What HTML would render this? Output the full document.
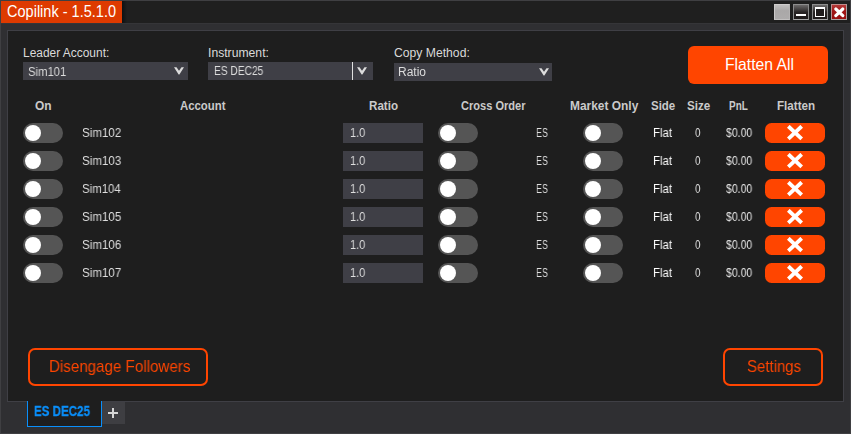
<!DOCTYPE html><html><head><meta charset="utf-8"><title>Copilink - 1.5.1.0</title><style>
*{box-sizing:border-box;margin:0;padding:0}
html,body{width:851px;height:434px;overflow:hidden;background:#2d2d30}
body{position:relative;font-family:"Liberation Sans",sans-serif;font-size:12px;color:#e4e4e4}
.a{position:absolute;white-space:nowrap;line-height:1}
.t{transform-origin:0 0}
.g{will-change:transform}
#win{left:0;top:0;width:851px;height:434px;border:1px solid #3f3f42;background:#2f2f32}
#tbar{left:1px;top:1px;width:849px;height:22px;background:#1f1f1f}
#ttab{left:1px;top:1px;width:121px;height:22px;background:#de3a00}
#panel{left:7px;top:30px;width:837px;height:372px;border:1px solid #3f3f45;background:#1e1e1e}
.cb{background:#3f3f46;height:18px}
.tg{width:40px;height:20px;border-radius:10px;background:#555}
.tg i{position:absolute;left:2px;top:2px;width:16px;height:16px;border-radius:8px;background:#fff}
.rb{left:343px;width:80px;height:20px;background:#3f3f46}
.fx{left:765px;width:60px;height:20px;border-radius:6.5px;background:#ff4500}
.ob{border:2px solid #ff4500;border-radius:7px}
.wb{top:4px;width:16px;height:16px}
</style></head><body>
<div id="win" class="a"></div>
<div id="tbar" class="a"></div>
<div class="a" style="left:1px;top:23px;width:849px;height:1px;background:#353538"></div>
<div class="a" style="left:122px;top:1px;width:5px;height:22px;background:linear-gradient(to right,#0d1113,#1f1f1f)"></div>
<div id="ttab" class="a"></div>
<div class="a wb" style="left:774px;background:linear-gradient(#c0bebe,#aaa8a8 40%,#adabab);border:1px solid;border-color:#cfcdcd #b4b2b2 #c2c0c0 #cbc9c9"></div>
<div class="a wb" style="left:793px;background:linear-gradient(#6c6a6a,#282424 52%,#1e1a1a);border:1px solid;border-color:#8e8e8e #8a8a8a #a6a6a6 #8a8a8a"><div class="a" style="left:2px;top:9px;width:10px;height:2px;background:#fff"></div></div>
<div class="a wb" style="left:812px;background:linear-gradient(#6c6a6a,#282424 52%,#1e1a1a);border:1px solid;border-color:#8e8e8e #8a8a8a #a6a6a6 #8a8a8a"><div class="a" style="left:2px;top:2px;width:10px;height:10px;border:1px solid #fff;border-top-width:2px;background:#1f1b1b"></div></div>
<div class="a wb" style="left:831px;background:linear-gradient(#b43a3a,#a01616 45%,#9a1010);border:1px solid;border-color:#c08c8c #a8a0a0 #a8a4a4 #b89090"><svg class="a" style="left:2px;top:2px" width="11" height="11" viewBox="0 0 11 11"><path d="M1.8 2.0 L8.8 8.6 M8.8 2.0 L1.8 8.6" stroke="#fff" stroke-width="3.1" stroke-linecap="round" fill="none"/></svg></div>
<div id="panel" class="a"></div>
<div class="a cb" style="left:23px;top:62px;width:165px"></div>
<svg class="a" style="left:174px;top:67px" width="10" height="8" viewBox="0 0 10 8"><path d="M0 0.2 L2.5 0.2 L5 3.8 L7.5 0.2 L10 0.2 L5.4 7.4 L4.6 7.4 Z" fill="#dcdcdc"/></svg>
<div class="a cb" style="left:208px;top:62px;width:165px"></div>
<div class="a" style="left:352px;top:62px;width:1px;height:18px;background:#e0e0e0"></div>
<svg class="a" style="left:357px;top:67px" width="10" height="8" viewBox="0 0 10 8"><path d="M0 0.2 L2.5 0.2 L5 3.8 L7.5 0.2 L10 0.2 L5.4 7.4 L4.6 7.4 Z" fill="#dcdcdc"/></svg>
<div class="a cb" style="left:394px;top:63px;width:158px"></div>
<svg class="a" style="left:539px;top:68.2px" width="10" height="8" viewBox="0 0 10 8"><path d="M0 0.2 L2.5 0.2 L5 3.8 L7.5 0.2 L10 0.2 L5.4 7.4 L4.6 7.4 Z" fill="#dcdcdc"/></svg>
<div class="a" style="left:688px;top:46px;width:140px;height:38px;border-radius:6px;background:#ff4500"></div>
<div class="a tg" style="left:23px;top:123px"><i></i></div>
<div class="a rb" style="top:123px"></div>
<div class="a tg" style="left:438px;top:123px"><i></i></div>
<div class="a tg" style="left:583px;top:123px"><i></i></div>
<div class="a fx" style="top:123px"><svg class="a" style="left:22px;top:2px" width="16" height="16" viewBox="0 0 16 16"><path d="M1.3 1.3 L14.7 13.9 M14.7 1.3 L1.3 13.9" stroke="#fff" stroke-width="3.9" fill="none"/></svg></div>
<div class="a t g" style="left:81.84px;top:127px;font-size:12px;color:#dedede;transform:scaleX(0.9641);">Sim102</div>
<div class="a t g" style="left:350.10px;top:127px;font-size:12px;color:#dedede;transform:scaleX(0.9133);">1.0</div>
<div class="a t g" style="left:535.98px;top:127px;font-size:12px;color:#dedede;transform:scaleX(0.7491);">ES</div>
<div class="a t g" style="left:653.03px;top:127px;font-size:12px;color:#fff;transform:scaleX(0.9526);">Flat</div>
<div class="a t g" style="left:695.46px;top:127px;font-size:12px;color:#dedede;transform:scaleX(0.8069);">0</div>
<div class="a t g" style="left:725.93px;top:127px;font-size:12px;color:#e6e6e6;transform:scaleX(0.8743);">$0.00</div>
<div class="a tg" style="left:23px;top:151px"><i></i></div>
<div class="a rb" style="top:151px"></div>
<div class="a tg" style="left:438px;top:151px"><i></i></div>
<div class="a tg" style="left:583px;top:151px"><i></i></div>
<div class="a fx" style="top:151px"><svg class="a" style="left:22px;top:2px" width="16" height="16" viewBox="0 0 16 16"><path d="M1.3 1.3 L14.7 13.9 M14.7 1.3 L1.3 13.9" stroke="#fff" stroke-width="3.9" fill="none"/></svg></div>
<div class="a t g" style="left:81.84px;top:155px;font-size:12px;color:#dedede;transform:scaleX(0.9641);">Sim103</div>
<div class="a t g" style="left:350.10px;top:155px;font-size:12px;color:#dedede;transform:scaleX(0.9133);">1.0</div>
<div class="a t g" style="left:535.98px;top:155px;font-size:12px;color:#dedede;transform:scaleX(0.7491);">ES</div>
<div class="a t g" style="left:653.03px;top:155px;font-size:12px;color:#fff;transform:scaleX(0.9526);">Flat</div>
<div class="a t g" style="left:695.46px;top:155px;font-size:12px;color:#dedede;transform:scaleX(0.8069);">0</div>
<div class="a t g" style="left:725.93px;top:155px;font-size:12px;color:#e6e6e6;transform:scaleX(0.8743);">$0.00</div>
<div class="a tg" style="left:23px;top:179px"><i></i></div>
<div class="a rb" style="top:179px"></div>
<div class="a tg" style="left:438px;top:179px"><i></i></div>
<div class="a tg" style="left:583px;top:179px"><i></i></div>
<div class="a fx" style="top:179px"><svg class="a" style="left:22px;top:2px" width="16" height="16" viewBox="0 0 16 16"><path d="M1.3 1.3 L14.7 13.9 M14.7 1.3 L1.3 13.9" stroke="#fff" stroke-width="3.9" fill="none"/></svg></div>
<div class="a t g" style="left:81.86px;top:183px;font-size:12px;color:#dedede;transform:scaleX(0.9529);">Sim104</div>
<div class="a t g" style="left:350.10px;top:183px;font-size:12px;color:#dedede;transform:scaleX(0.9133);">1.0</div>
<div class="a t g" style="left:535.98px;top:183px;font-size:12px;color:#dedede;transform:scaleX(0.7491);">ES</div>
<div class="a t g" style="left:653.03px;top:183px;font-size:12px;color:#fff;transform:scaleX(0.9526);">Flat</div>
<div class="a t g" style="left:695.46px;top:183px;font-size:12px;color:#dedede;transform:scaleX(0.8069);">0</div>
<div class="a t g" style="left:725.93px;top:183px;font-size:12px;color:#e6e6e6;transform:scaleX(0.8743);">$0.00</div>
<div class="a tg" style="left:23px;top:207px"><i></i></div>
<div class="a rb" style="top:207px"></div>
<div class="a tg" style="left:438px;top:207px"><i></i></div>
<div class="a tg" style="left:583px;top:207px"><i></i></div>
<div class="a fx" style="top:207px"><svg class="a" style="left:22px;top:2px" width="16" height="16" viewBox="0 0 16 16"><path d="M1.3 1.3 L14.7 13.9 M14.7 1.3 L1.3 13.9" stroke="#fff" stroke-width="3.9" fill="none"/></svg></div>
<div class="a t g" style="left:81.84px;top:211px;font-size:12px;color:#dedede;transform:scaleX(0.9641);">Sim105</div>
<div class="a t g" style="left:350.10px;top:211px;font-size:12px;color:#dedede;transform:scaleX(0.9133);">1.0</div>
<div class="a t g" style="left:535.98px;top:211px;font-size:12px;color:#dedede;transform:scaleX(0.7491);">ES</div>
<div class="a t g" style="left:653.03px;top:211px;font-size:12px;color:#fff;transform:scaleX(0.9526);">Flat</div>
<div class="a t g" style="left:695.46px;top:211px;font-size:12px;color:#dedede;transform:scaleX(0.8069);">0</div>
<div class="a t g" style="left:725.93px;top:211px;font-size:12px;color:#e6e6e6;transform:scaleX(0.8743);">$0.00</div>
<div class="a tg" style="left:23px;top:235px"><i></i></div>
<div class="a rb" style="top:235px"></div>
<div class="a tg" style="left:438px;top:235px"><i></i></div>
<div class="a tg" style="left:583px;top:235px"><i></i></div>
<div class="a fx" style="top:235px"><svg class="a" style="left:22px;top:2px" width="16" height="16" viewBox="0 0 16 16"><path d="M1.3 1.3 L14.7 13.9 M14.7 1.3 L1.3 13.9" stroke="#fff" stroke-width="3.9" fill="none"/></svg></div>
<div class="a t g" style="left:81.84px;top:239px;font-size:12px;color:#dedede;transform:scaleX(0.9641);">Sim106</div>
<div class="a t g" style="left:350.10px;top:239px;font-size:12px;color:#dedede;transform:scaleX(0.9133);">1.0</div>
<div class="a t g" style="left:535.98px;top:239px;font-size:12px;color:#dedede;transform:scaleX(0.7491);">ES</div>
<div class="a t g" style="left:653.03px;top:239px;font-size:12px;color:#fff;transform:scaleX(0.9526);">Flat</div>
<div class="a t g" style="left:695.46px;top:239px;font-size:12px;color:#dedede;transform:scaleX(0.8069);">0</div>
<div class="a t g" style="left:725.93px;top:239px;font-size:12px;color:#e6e6e6;transform:scaleX(0.8743);">$0.00</div>
<div class="a tg" style="left:23px;top:263px"><i></i></div>
<div class="a rb" style="top:263px"></div>
<div class="a tg" style="left:438px;top:263px"><i></i></div>
<div class="a tg" style="left:583px;top:263px"><i></i></div>
<div class="a fx" style="top:263px"><svg class="a" style="left:22px;top:2px" width="16" height="16" viewBox="0 0 16 16"><path d="M1.3 1.3 L14.7 13.9 M14.7 1.3 L1.3 13.9" stroke="#fff" stroke-width="3.9" fill="none"/></svg></div>
<div class="a t g" style="left:81.84px;top:267px;font-size:12px;color:#dedede;transform:scaleX(0.9641);">Sim107</div>
<div class="a t g" style="left:350.10px;top:267px;font-size:12px;color:#dedede;transform:scaleX(0.9133);">1.0</div>
<div class="a t g" style="left:535.98px;top:267px;font-size:12px;color:#dedede;transform:scaleX(0.7491);">ES</div>
<div class="a t g" style="left:653.03px;top:267px;font-size:12px;color:#fff;transform:scaleX(0.9526);">Flat</div>
<div class="a t g" style="left:695.46px;top:267px;font-size:12px;color:#dedede;transform:scaleX(0.8069);">0</div>
<div class="a t g" style="left:725.93px;top:267px;font-size:12px;color:#e6e6e6;transform:scaleX(0.8743);">$0.00</div>
<div class="a ob" style="left:28px;top:348px;width:180px;height:38px"></div>
<div class="a ob" style="left:723px;top:348px;width:100px;height:38px"></div>
<div class="a" style="left:27px;top:401px;width:75px;height:26px;background:#1e1e1e;border:1px solid #0a8ffa;border-top:none"></div>
<div class="a" style="left:102px;top:402px;width:23px;height:22px;background:#3e3e42"></div>
<div class="a" style="left:108px;top:412px;width:10px;height:2px;background:#d6d6d6"></div>
<div class="a" style="left:112px;top:408px;width:2px;height:10px;background:#d6d6d6"></div>
<div class="a t" style="left:7.04px;top:4px;font-size:15.7px;color:#fff;transform:scaleX(0.9260);">Copilink - 1.5.1.0</div>
<div class="a t" style="left:23.31px;top:47px;font-size:12px;color:#dadada;transform:scaleX(0.9947);">Leader Account:</div>
<div class="a t" style="left:207.79px;top:47px;font-size:12px;color:#dadada;transform:scaleX(1.0145);">Instrument:</div>
<div class="a t" style="left:393.77px;top:47px;font-size:12px;color:#dadada;transform:scaleX(1.0146);">Copy Method:</div>
<div class="a t g" style="left:28.43px;top:66px;font-size:12px;color:#dcdcdc;transform:scaleX(0.9410);">Sim101</div>
<div class="a t g" style="left:213.56px;top:65px;font-size:12px;color:#dcdcdc;transform:scaleX(0.8499);">ES DEC25</div>
<div class="a t g" style="left:398.39px;top:66px;font-size:12px;color:#dcdcdc;transform:scaleX(0.9984);">Ratio</div>
<div class="a t" style="left:724.52px;top:57px;font-size:15.7px;color:#fff;transform:scaleX(1.0012);">Flatten All</div>
<div class="a t" style="left:35.43px;top:100px;font-size:12px;color:#cacaca;font-weight:bold;transform:scaleX(0.9975);">On</div>
<div class="a t" style="left:180.35px;top:100px;font-size:12px;color:#cacaca;font-weight:bold;transform:scaleX(0.9473);">Account</div>
<div class="a t" style="left:369.32px;top:100px;font-size:12px;color:#cacaca;font-weight:bold;transform:scaleX(0.9687);">Ratio</div>
<div class="a t" style="left:461.31px;top:100px;font-size:12px;color:#cacaca;font-weight:bold;transform:scaleX(0.9212);">Cross Order</div>
<div class="a t" style="left:569.51px;top:100px;font-size:12px;color:#cacaca;font-weight:bold;transform:scaleX(0.9940);">Market Only</div>
<div class="a t" style="left:651.06px;top:100px;font-size:12px;color:#cacaca;font-weight:bold;transform:scaleX(0.9575);">Side</div>
<div class="a t" style="left:687.05px;top:100px;font-size:12px;color:#cacaca;font-weight:bold;transform:scaleX(0.9702);">Size</div>
<div class="a t" style="left:728.95px;top:100px;font-size:12px;color:#cacaca;font-weight:bold;transform:scaleX(0.8295);">PnL</div>
<div class="a t" style="left:777.02px;top:100px;font-size:12px;color:#cacaca;font-weight:bold;transform:scaleX(0.9688);">Flatten</div>
<div class="a t g" style="left:48.55px;top:359px;font-size:15.7px;color:#ff4500;transform:scaleX(0.9654);">Disengage Followers</div>
<div class="a t g" style="left:747.44px;top:359px;font-size:15.7px;color:#ff4500;transform:scaleX(0.9545);">Settings</div>
<div class="a t g" style="left:34.15px;top:404px;font-size:14px;color:#0a8ffa;font-weight:bold;transform:scaleX(0.8263);-webkit-text-stroke:0.3px #0a8ffa;">ES DEC25</div>
</body></html>
